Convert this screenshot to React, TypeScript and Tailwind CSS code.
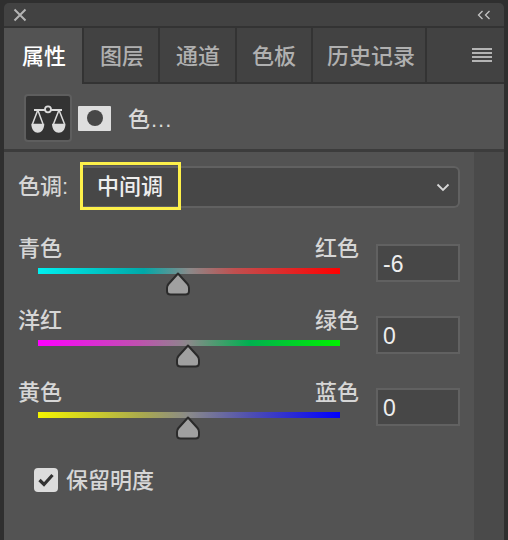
const font = "font-['Liberation_Sans','Noto_Sans_CJK_SC',sans-serif]";

const tabs = [
  { name: "图层", w: "w-[76px]", pad: "pl-[2px]" },
  { name: "通道", w: "w-[77px]", pad: "pl-[1px]" },
  { name: "色板", w: "w-[76px]", pad: "pl-0" },
  { name: "历史记录", w: "w-[114px]", pad: "pl-[4px]" },
];

function Thumb({ className }: { className: string }) {
  return (
    <svg width="26" height="24" viewBox="0 0 26 24" className={`absolute top-[4px] ${className}`}>
      <path
        d="M13 1.5 L22.5 12 Q24 13.8 24 16 L24 19 Q24 22.5 20.5 22.5 L5.5 22.5 Q2 22.5 2 19 L2 16 Q2 13.8 3.5 12 Z"
        fill="#a0a0a0"
        stroke="#2a2a2a"
        strokeWidth="2"
        strokeLinejoin="round"
      />
    </svg>
  );
}

function SliderRow({
  left,
  right,
  value,
  gradient,
  thumb,
}: {
  left: string;
  right: string;
  value: string;
  gradient: string;
  thumb: string;
}) {
  return (
    <div className="flex h-[72px] pl-[14px]">
      <div className="w-[342px]">
        <div className="flex h-[30px] items-center justify-between text-[22px] font-medium leading-none text-[#d6d6d6]">
          <span>{left}</span>
          <span className="mr-[1px]">{right}</span>
        </div>
        <div className="relative ml-[20px] mt-[4px] w-[302px]">
          <div className={`h-[6px] ${gradient}`} />
          <Thumb className={thumb} />
        </div>
      </div>
      <div className="ml-[16px] mt-[10px] flex h-[38px] w-[84px] items-center border-2 border-[#616161] bg-[#474747] pl-[5px] pt-[3px] text-[23px] leading-none text-[#eeeeee]">
        {value}
      </div>
    </div>
  );
}

export default function App() {
  return (
    <div className={`flex h-[540px] w-[508px] flex-col overflow-hidden bg-[#2f2f2f] pl-[4px] pr-[4px] pt-[3px] ${font}`}>
      <div className="flex h-[23px] shrink-0 items-center justify-between rounded-t-[5px] bg-[#424242] pl-[9px] pr-[13px]">
        <svg width="14" height="14" viewBox="0 0 14 14">
          <path d="M1.5 1.5 L12.5 12.5 M12.5 1.5 L1.5 12.5" stroke="#b4b4b4" strokeWidth="2" />
        </svg>
        <svg width="14" height="10" viewBox="0 0 14 10">
          <path d="M5.5 1 L1.5 5 L5.5 9 M12.5 1 L8.5 5 L12.5 9" stroke="#c4c4c4" strokeWidth="1.3" fill="none" />
        </svg>
      </div>

      <div className="flex h-[58px] shrink-0 border-t-2 border-b-2 border-[#333333] bg-[#424242]">
        <div className="-mb-[2px] flex w-[78px] items-center justify-center bg-[#535353] pl-[2px] pt-[1px] text-[22px] font-medium leading-none text-white">
          属性
        </div>
        {tabs.map((t) => (
          <div
            key={t.name}
            className={`flex ${t.w} ${t.pad} items-center justify-center border-l-2 border-[#333333] pt-[3px] text-[22px] font-medium leading-none text-[#b0b0b0]`}
          >
            {t.name}
          </div>
        ))}
        <div className="flex flex-1 items-center justify-end border-l-2 border-[#333333] pr-[12px]">
          <div className="flex w-[20px] flex-col gap-[2px]">
            <div className="h-[2px] bg-[#b4b4b4]" />
            <div className="h-[2px] bg-[#b4b4b4]" />
            <div className="h-[2px] bg-[#b4b4b4]" />
            <div className="h-[2px] bg-[#b4b4b4]" />
          </div>
        </div>
      </div>

      <div className="flex h-[68px] shrink-0 items-center border-b-[3px] border-[#3c3c3c] bg-[#535353] pl-[20px] pt-[3px]">
        <div className="flex h-[48px] w-[48px] items-center justify-center rounded-[4px] border-2 border-[#5e5e5e] bg-[#333333]">
          <svg width="36" height="30" viewBox="0 0 36 30">
            <circle cx="18" cy="6.3" r="3" fill="none" stroke="#dcdcdc" strokeWidth="1.8" />
            <path d="M4 7 H15 M21 7 H32" stroke="#dcdcdc" strokeWidth="2" />
            <path d="M7.8 7 L2.5 21 M7.8 7 L13 21 M29 7 L23.5 21 M29 7 L34.5 21" stroke="#dcdcdc" strokeWidth="1.5" fill="none" />
            <path d="M1.3 20.7 H14.3 C14.3 26.5 11 29.7 7.8 29.7 C4.6 29.7 1.3 26.5 1.3 20.7 Z M22 20.7 H35.5 C35.5 26.5 32.2 29.7 28.8 29.7 C25.3 29.7 22 26.5 22 20.7 Z" fill="#dcdcdc" />
          </svg>
        </div>
        <div className="ml-[6px] flex h-[25px] w-[33px] items-center justify-center rounded-[1px] bg-[#dedede]">
          <div className="h-[16px] w-[16px] rounded-full bg-[#474747]" />
        </div>
        <span className="ml-[17px] mt-[3px] text-[22px] font-medium leading-none tracking-[1px] text-[#d8d8d8]">色...</span>
      </div>

      <div className="flex flex-1">
        <div className="w-[470px] bg-[#535353]">
          <div className="relative ml-[14px] mt-[10px] flex h-[48px] items-center text-[22px] font-medium leading-none text-[#d6d6d6]">
            <span className="w-[62px] pt-[2px]">色调:</span>
            <div className="mt-[2px] flex h-[42px] w-[380px] items-center justify-between rounded-r-[6px] border-2 border-l-0 border-[#616161] bg-[#474747] pl-[17px] pr-[8px] text-[#eeeeee]">
              <span>中间调</span>
              <svg width="14" height="9" viewBox="0 0 14 9">
                <path d="M1.5 1.5 L7 7 L12.5 1.5" stroke="#d8d8d8" strokeWidth="1.8" fill="none" />
              </svg>
            </div>
            <div className="absolute left-[62px] top-0 h-[48px] w-[101px] border-[3px] border-[#fdf04a]" />
          </div>

          <div className="mt-[24px]">
            <SliderRow
              left="青色"
              right="红色"
              value="-6"
              gradient="bg-[linear-gradient(to_right,#00f0f0,#00a8a8_35%,#8a8a8a_50%,#c05050_65%,#ff0000)]"
              thumb="left-[127px]"
            />
            <SliderRow
              left="洋红"
              right="绿色"
              value="0"
              gradient="bg-[linear-gradient(to_right,#ff00ff,#c050b0_33%,#8a8a8a_50%,#00b050_70%,#00f000)]"
              thumb="left-[137px]"
            />
            <SliderRow
              left="黄色"
              right="蓝色"
              value="0"
              gradient="bg-[linear-gradient(to_right,#f5f500,#a8a850_35%,#8a8a8a_50%,#5050b0_70%,#0000ff)]"
              thumb="left-[137px]"
            />
          </div>

          <div className="ml-[30px] mt-[18px] flex items-center">
            <div className="flex h-[24px] w-[24px] items-center justify-center rounded-[4px] bg-[#dcdcdc]">
              <svg width="16" height="16" viewBox="0 0 16 16">
                <path d="M1.5 8 L6 12.5 L14.5 3" stroke="#333333" strokeWidth="3.2" fill="none" />
              </svg>
            </div>
            <span className="ml-[8px] pt-[2px] text-[22px] font-medium leading-none text-[#d6d6d6]">保留明度</span>
          </div>
        </div>
        <div className="flex-1 bg-[#4a4a4a]" />
      </div>
    </div>
  );
}
